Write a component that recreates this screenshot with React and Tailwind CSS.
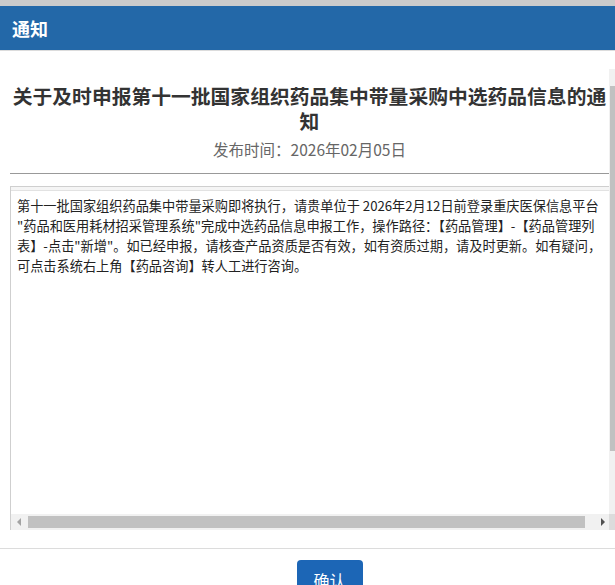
import React from 'react';

const font = { fontFamily: '"Noto Sans CJK SC", "Noto Sans", sans-serif' };

const lines = [
  '第十一批国家组织药品集中带量采购即将执行，请贵单位于 2026年2月12日前登录重庆医保信息平台',
  '"药品和医用耗材招采管理系统"完成中选药品信息申报工作，操作路径：【药品管理】-【药品管理列',
  '表】-点击"新增"。如已经申报，请核查产品资质是否有效，如有资质过期，请及时更新。如有疑问，',
  '可点击系统右上角【药品咨询】转人工进行咨询。',
];

const App = () => {
  return (
    <div className="w-[615px] h-[585px] overflow-hidden bg-white flex flex-col" style={font}>
      <div className="h-[6px] bg-[#cbcbcb] shrink-0" />
      <div className="h-[45px] shrink-0 bg-[#2368a8] flex items-center px-[12px] border-b border-[#dcdcdc]">
        <span className="text-white font-bold text-[18px] leading-none">通知</span>
      </div>

      {/* modal body */}
      <div className="h-[497px] shrink-0 flex">
        <div className="flex-1 min-w-0 flex flex-col pl-[10px] pt-[32px] pb-[18px]">
          <h1 className="text-[19.8px] leading-[25px] font-bold text-[#333] text-center whitespace-nowrap">
            关于及时申报第十一批国家组织药品集中带量采购中选药品信息的通
            <br />
            知
          </h1>
          <div className="mt-[6px] text-[15.5px] leading-[20px] text-[#666] text-center">
            发布时间：2026年02月05日
          </div>
          <div className="mt-[14px] h-px bg-[#999]" />

          <div className="mt-[12px] flex-1 min-h-0 flex flex-col border-l border-t border-[#cfcfcf]">
            <div className="h-[4px] bg-[#f5f5f5] border-b border-[#e2e2e2]" />
            <div className="flex-1 min-w-0 px-[6px] pt-[5px] text-[13.2px] leading-[20px] text-[#222] whitespace-nowrap overflow-hidden">
              {lines.map((l, i) => (
                <div key={i}>{l}</div>
              ))}
            </div>
            {/* horizontal scrollbar */}
            <div className="h-[16px] bg-[#f1f1f1] flex items-center">
              <div className="w-[16px] flex justify-center">
                <div className="w-0 h-0 border-y-[4px] border-y-transparent border-r-[4px] border-r-[#a3a3a3]" />
              </div>
              <div className="flex-1 h-[12px] bg-[#c1c1c1] ml-[1px] mr-[12px]" />
              <div className="w-[12px] flex justify-center">
                <div className="w-0 h-0 border-y-[4px] border-y-transparent border-l-[4px] border-l-[#505050]" />
              </div>
            </div>
          </div>
        </div>

        {/* page scrollbar (clipped) */}
        <div className="w-[6px] shrink-0 mt-[18px] mb-[18px] bg-[#f1f1f1] flex flex-col">
          <div className="h-[17px]" />
          <div className="h-[365px] bg-[#c1c1c1] ml-[1px]" />
          <div className="flex-1" />
          <div className="h-[16px] bg-[#dcdcdc]" />
        </div>
      </div>

      <div className="border-t border-[#dcdcdc] flex justify-center pl-[44px] pt-[11px]">
        <button className="w-[66px] h-[36px] rounded-[4px] bg-[#1c66b6] text-white text-[16px] leading-none pt-[3px]">
          确认
        </button>
      </div>
    </div>
  );
};

export default App;
